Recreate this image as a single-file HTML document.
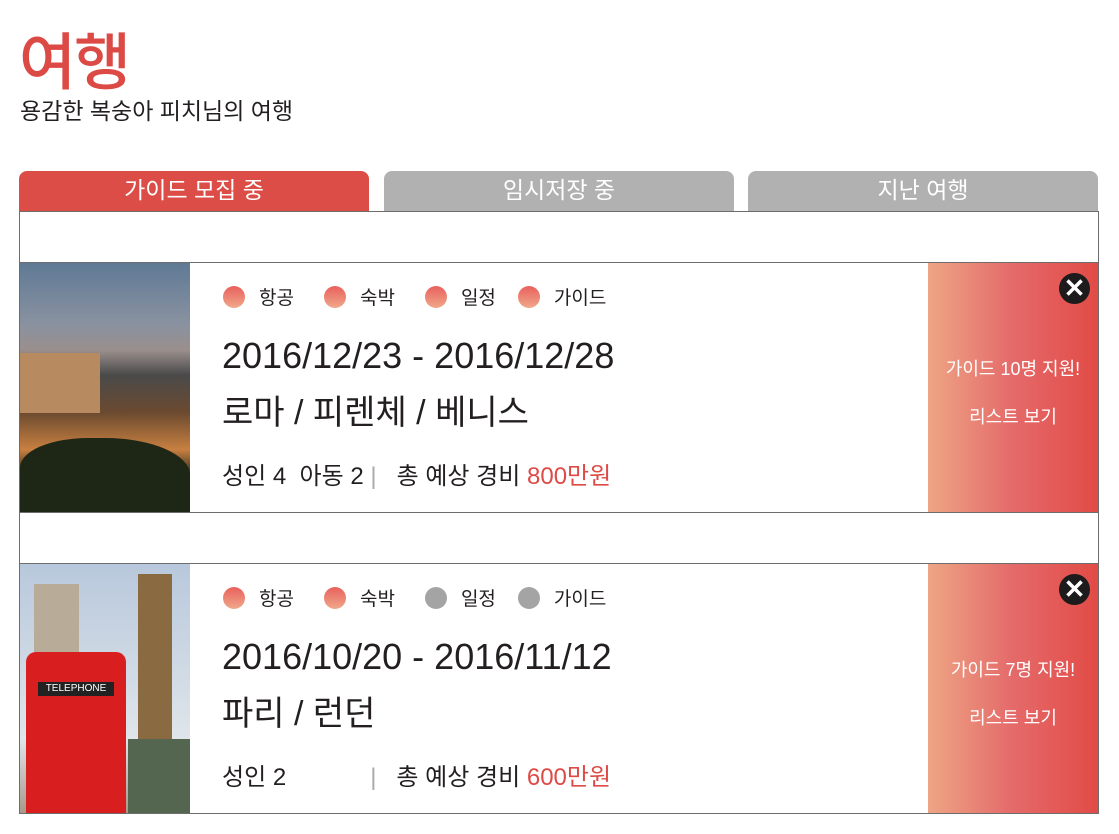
<!DOCTYPE html>
<html><head><meta charset="utf-8"><style>
*{margin:0;padding:0;box-sizing:border-box}
body{width:1119px;height:834px;background:#fff;font-family:"Liberation Sans","Noto Sans CJK KR",sans-serif;color:#231f20;position:relative;overflow:hidden}
.abs{position:absolute}
h1{position:absolute;left:19px;top:12px;font-size:62px;font-weight:500;color:#dc4a45;letter-spacing:-2px}
.sub{left:20px;top:92px;font-size:23px}
.tab{top:171px;height:40px;width:350px;border-radius:8px 8px 0 0;color:#fff;font-size:23px;text-align:center;line-height:38px}
.box{left:19px;width:1080px;border:1px solid #6d6d6d;background:#fff}
.card{left:19px;width:1080px;height:251px;border:1px solid #6d6d6d;background:#fff}
.img{left:0;top:0;width:170px;height:249px;overflow:hidden}
.right{right:0;top:0;width:170px;height:249px;background:linear-gradient(90deg,#eea585,#e46a6a 50%,#e24b46);color:#fff;font-size:18px;text-align:center}
.x{right:8px;top:10px;width:31px;height:31px;border-radius:50%;background:#1d1b1b;color:#fff;font-size:26px;font-weight:bold;line-height:30px;text-align:center}
.tags{left:203px;top:20px;font-size:19px;display:flex}
.tags span{display:flex;align-items:center;margin-right:30px}
.tags span:nth-child(3){margin-right:22px}
.dot{width:22px;height:22px;border-radius:50%;background:linear-gradient(#e8605c,#f0a88a);margin-right:14px}
.g{background:#a4a4a4}
.date{left:202px;top:72px;font-size:36px}
.city{left:202px;top:122px;font-size:34px}
.info{left:202px;top:193px;font-size:24px}
.red{color:#de4a45}
</style></head><body>
<h1>여행</h1>
<div class="abs sub">용감한 복숭아 피치님의 여행</div>
<div class="abs tab" style="left:19px;background:#dc4d47">가이드 모집 중</div>
<div class="abs tab" style="left:384px;background:#b1b1b1">임시저장 중</div>
<div class="abs tab" style="left:748px;background:#b1b1b1">지난 여행</div>
<div class="abs box" style="top:211px;height:53px"></div>
<div class="abs card" style="top:262px">
 <div class="abs img" style="background:linear-gradient(#5f7a95 0%,#8a92a0 25%,#9a8f8c 35%,#4a4a4a 45%,#6b4a30 60%,#c88040 75%,#2a2a1c 85%,#1c2414 100%)">
  <div class="abs" style="left:0;top:90px;width:80px;height:60px;background:#b88a60"></div>
  <div class="abs" style="left:0;top:175px;width:170px;height:74px;background:#1e2616;border-radius:40% 50% 0 0"></div>
 </div>
 <div class="abs tags"><span><i class="dot"></i>항공</span><span><i class="dot"></i>숙박</span><span><i class="dot"></i>일정</span><span><i class="dot"></i>가이드</span></div>
 <div class="abs date">2016/12/23 - 2016/12/28</div>
 <div class="abs city">로마 / 피렌체 / 베니스</div>
 <div class="abs info">성인 4&nbsp; 아동 2 <span style="color:#aaa">|</span>&nbsp;&nbsp; 총 예상 경비 <span class="red">800만원</span></div>
 <div class="abs right"><div class="abs x">✕</div><div class="abs" style="left:0;width:170px;top:92px">가이드 10명 지원!</div><div class="abs" style="left:0;width:170px;top:140px">리스트 보기</div></div>
</div>
<div class="abs box" style="top:512px;height:53px"></div>
<div class="abs card" style="top:563px">
 <div class="abs img" style="background:linear-gradient(#b8c8dc,#dfe5ea 70%,#a89a8a)">
  <div class="abs" style="left:118px;top:10px;width:34px;height:200px;background:#8a6a40"></div>
  <div class="abs" style="left:14px;top:20px;width:45px;height:80px;background:#b8ac98"></div>
  <div class="abs" style="left:108px;top:175px;width:62px;height:74px;background:#556650"></div>
  <div class="abs" style="left:6px;top:88px;width:100px;height:161px;background:#d81e1e;border-radius:10px 10px 0 0"></div>
  <div class="abs" style="left:18px;top:118px;width:76px;height:14px;background:#222;color:#fff;font-size:10px;text-align:center;line-height:14px">TELEPHONE</div>
 </div>
 <div class="abs tags"><span><i class="dot"></i>항공</span><span><i class="dot"></i>숙박</span><span><i class="dot g"></i>일정</span><span><i class="dot g"></i>가이드</span></div>
 <div class="abs date">2016/10/20 - 2016/11/12</div>
 <div class="abs city">파리 / 런던</div>
 <div class="abs info">성인 2<span style="display:inline-block;width:84px"></span><span style="color:#aaa">|</span>&nbsp;&nbsp; 총 예상 경비 <span class="red">600만원</span></div>
 <div class="abs right"><div class="abs x">✕</div><div class="abs" style="left:0;width:170px;top:92px">가이드 7명 지원!</div><div class="abs" style="left:0;width:170px;top:140px">리스트 보기</div></div>
</div>
</body></html>
